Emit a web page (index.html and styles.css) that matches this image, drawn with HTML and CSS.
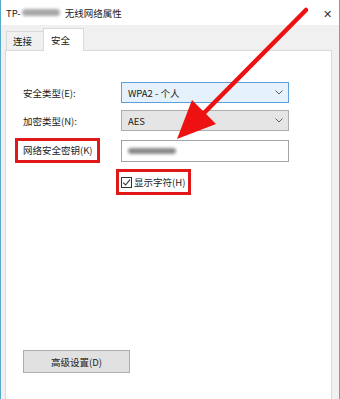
FILE: index.html
```html
<!DOCTYPE html>
<html lang="zh-CN">
<head>
    <meta charset="UTF-8">
    <meta name="viewport" content="width=device-width, initial-scale=1.0">
    <title>无线网络属性</title>
    <link rel="stylesheet" href="styles.css">
</head>
<body>
    <div class="window">

        <div class="titlebar">
            <span class="title">TP-<i class="smudge"></i>无线网络属性</span>
            <span class="close">✕</span>
        </div>

        <div class="body">
            <div class="tabs">
                <div class="tab">连接</div>
                <div class="tab active">安全</div>
            </div>

            <div class="panel">
                <div class="fields">
                    <label class="lbl">安全类型(E):</label>
                    <div class="select focus">
                        <span>WPA2 - 个人</span>
                        <svg width="8" height="5" viewBox="0 0 8 5"><path d="M0.5 0.5 L4 4 L7.5 0.5" fill="none" stroke="#606060" stroke-width="1"/></svg>
                    </div>

                    <label class="lbl">加密类型(N):</label>
                    <div class="select">
                        <span>AES</span>
                        <svg width="8" height="5" viewBox="0 0 8 5"><path d="M0.5 0.5 L4 4 L7.5 0.5" fill="none" stroke="#606060" stroke-width="1"/></svg>
                    </div>

                    <label class="lbl mark">网络安全密钥(K)</label>
                    <div class="input"><i class="smudge key"></i></div>

                    <span></span>
                    <label class="check mark">
                        <span class="box">
                            <svg width="9" height="9" viewBox="0 0 9 9"><path d="M1.2 4.6 L3.6 7 L8 1.6" fill="none" stroke="#333" stroke-width="1.1"/></svg>
                        </span>
                        显示字符(H)
                    </label>
                </div>

                <button class="adv">高级设置(D)</button>
            </div>
        </div>

        <svg class="arrow" width="340" height="399" viewBox="0 0 340 399">
            <line x1="306" y1="10" x2="205" y2="112" stroke="#ee1111" stroke-width="4.5" stroke-linecap="round"/>
            <polygon points="177,139 192,100 216,124" fill="#ee1111"/>
        </svg>
    </div>
</body>
</html>
```

FILE: styles.css
```css
*{
    margin: 0px;
    padding: 0px;
    box-sizing: border-box;
}

body{
    width: 340px;
    height: 399px;
    overflow: hidden;
    font-family: "Noto Sans CJK SC", "Liberation Sans", sans-serif;
    font-size: 9.5px;
    color: #1a1a1a;
    background-color: #f0f0f0;
}

.window{
    position: relative;
    height: 399px;
    border-left: 1px solid #57a9cc;
    border-right: 1px solid #57a9cc;
    background-color: #f0f0f0;
}

.titlebar{
    height: 25px;
    background-color: #fff;
    display: flex;
    align-items: center;
    justify-content: space-between;
    padding: 0 7px 0 5px;
}

.title{
    display: flex;
    align-items: center;
}

.smudge{
    display: inline-block;
    width: 38px;
    height: 7px;
    margin: 0 5px 0 1px;
    background-color: #a8a8a8;
    border-radius: 4px;
    filter: blur(1.4px);
}

.close{
    font-size: 11px;
    color: #333;
}

.body{
    padding: 0 7px 0 4px;
}

.tabs{
    height: 25px;
    display: flex;
    align-items: flex-end;
    padding-left: 1px;
}

.tab{
    width: 38px;
    height: 19px;
    padding-left: 6px;
    line-height: 18px;
    border: 1px solid #d9d9d9;
    border-bottom: none;
    background-color: #f0f0f0;
}

.tab.active{
    width: 41px;
    height: 23px;
    line-height: 22px;
    padding-left: 7px;
    margin-bottom: -1px;
    margin-left: -1px;
    background-color: #fff;
    position: relative;
    z-index: 1;
}

.panel{
    height: 360px;
    background-color: #fff;
    border: 1px solid #d9d9d9;
    padding: 31px 0 0 17px;
}

.fields{
    display: grid;
    grid-template-columns: 98px 168px;
    row-gap: 7px;
    align-items: center;
}

.select{
    height: 21px;
    display: flex;
    align-items: center;
    justify-content: space-between;
    padding: 0 5px 0 6px;
    border: 1px solid #adadad;
    background-color: #e5e5e5;
}

.select.focus{
    border-color: #5f9fd9;
    background-color: #e5f1fb;
}

.input{
    height: 22px;
    border: 1px solid #a4a4a4;
    background-color: #fff;
    display: flex;
    align-items: center;
}

.smudge.key{
    width: 48px;
    height: 6px;
    margin-left: 6px;
    background-color: #8a8a8a;
    filter: blur(1.6px);
}

.mark{
    border: 3px solid #e01818;
}

.lbl.mark{
    width: 85px;
    height: 25px;
    margin-left: -8px;
    padding-left: 5px;
    line-height: 19px;
}

.check{
    width: 75px;
    height: 26px;
    margin-left: -5px;
    margin-top: -1px;
    display: flex;
    align-items: center;
    gap: 2px;
    padding-left: 2px;
}

.check .box{
    width: 11px;
    height: 11px;
    border: 1px solid #333;
    display: flex;
    align-items: center;
    justify-content: center;
}

.adv{
    margin: 155px 0 0 0;
    width: 107px;
    height: 23px;
    font-family: inherit;
    font-size: 9.5px;
    color: #1a1a1a;
    background-color: #e1e1e1;
    border: 1px solid #adadad;
}

.arrow{
    position: absolute;
    left: -1px;
    top: 0;
    pointer-events: none;
}
```
